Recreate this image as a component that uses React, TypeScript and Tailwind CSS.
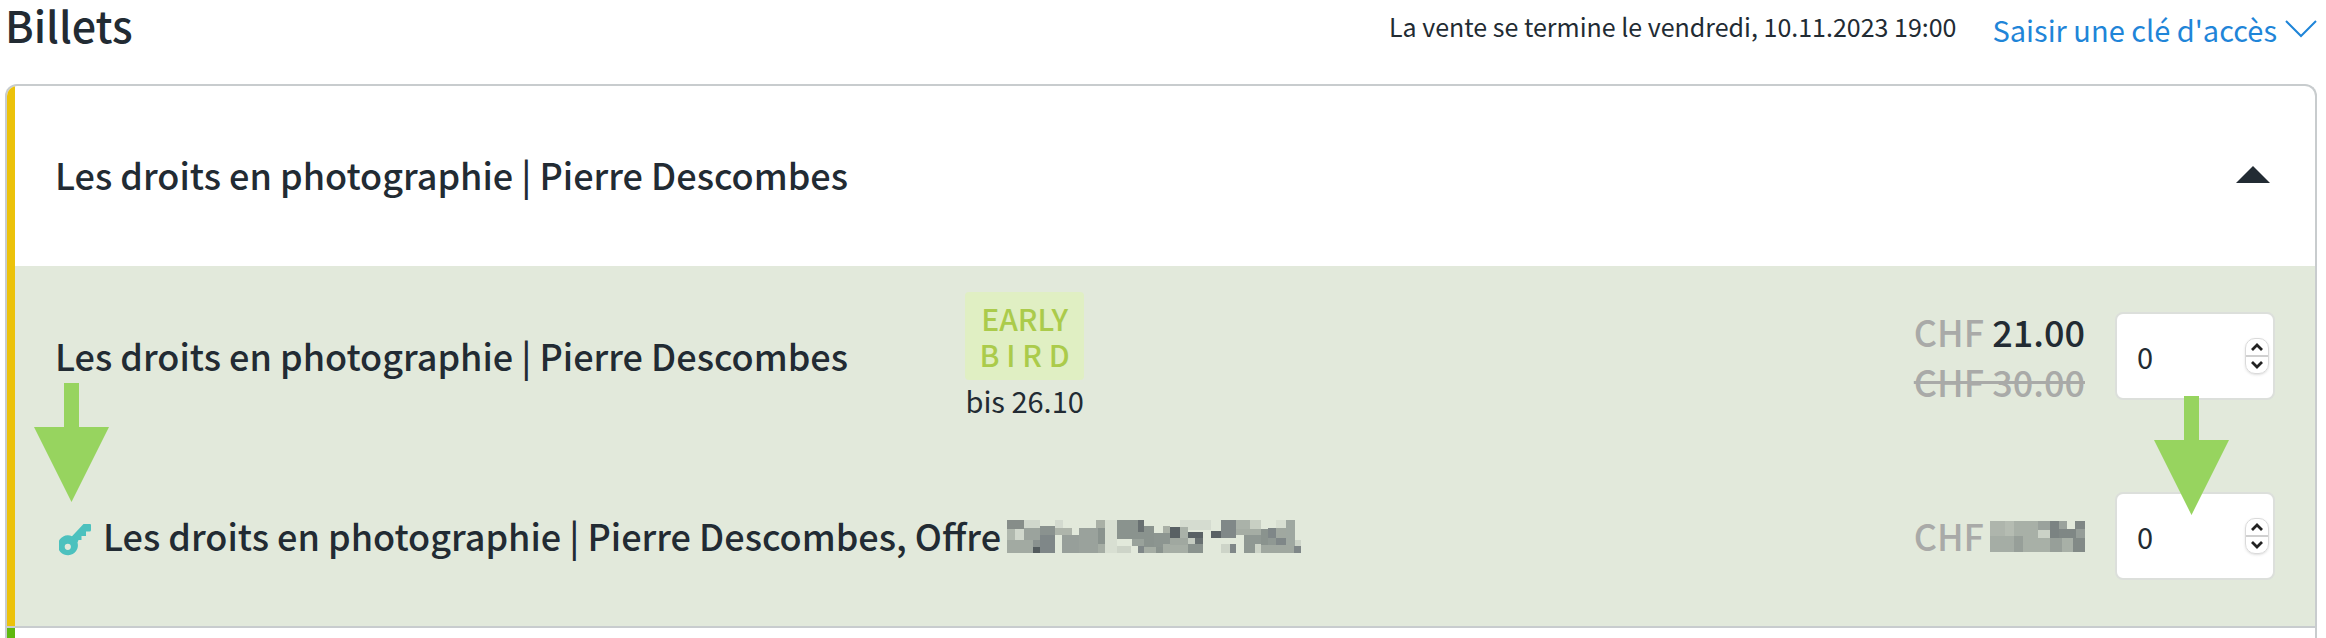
import { useState } from "react";

type Block = [number, number, number, number, string];

const NAME_BLOCKS: Block[] = [
  [81, 63, 51, 27, "#868d89"],
  [132, 63, 48, 24, "#d0d7cc"],
  [225, 63, 24, 24, "#d3dacf"],
  [81, 90, 24, 33, "#b0b8ae"],
  [105, 90, 27, 33, "#d0d7cc"],
  [132, 87, 48, 36, "#9ba39d"],
  [180, 81, 45, 42, "#8a928f"],
  [81, 123, 78, 39, "#a2aaa2"],
  [159, 123, 21, 21, "#8a928f"],
  [159, 144, 21, 18, "#535b5d"],
  [180, 108, 45, 54, "#7f8788"],
  [225, 87, 51, 21, "#aeb5ab"],
  [246, 108, 51, 54, "#979f9a"],
  [297, 87, 57, 75, "#9aa29c"],
  [348, 63, 27, 24, "#a9b0a6"],
  [354, 87, 21, 48, "#8a938e"],
  [354, 135, 21, 27, "#a5ada4"],
  [375, 63, 36, 99, "#d8dfd2"],
  [411, 63, 63, 57, "#8a938e"],
  [474, 63, 18, 36, "#687071"],
  [474, 99, 18, 21, "#8a938e"],
  [411, 141, 42, 21, "#cdd4c8"],
  [456, 120, 36, 21, "#99a29b"],
  [474, 141, 18, 21, "#7f8788"],
  [492, 81, 30, 63, "#8a938e"],
  [492, 144, 36, 18, "#a5ada4"],
  [522, 102, 48, 42, "#8c9590"],
  [549, 81, 21, 21, "#a9b0a6"],
  [528, 144, 21, 18, "#8a938e"],
  [549, 135, 21, 27, "#a5ada4"],
  [570, 84, 30, 33, "#596164"],
  [600, 63, 93, 30, "#d5dcd0"],
  [600, 84, 24, 33, "#aab2a9"],
  [570, 117, 54, 21, "#a0a8a0"],
  [570, 138, 54, 24, "#a6aea5"],
  [624, 99, 45, 18, "#596164"],
  [624, 117, 21, 18, "#c5ccc1"],
  [645, 117, 24, 18, "#687071"],
  [624, 135, 45, 27, "#8a938e"],
  [693, 96, 30, 21, "#596164"],
  [723, 63, 45, 54, "#808888"],
  [768, 63, 42, 27, "#aab2a9"],
  [810, 63, 33, 27, "#c8cfc3"],
  [768, 90, 75, 18, "#a5ada4"],
  [723, 135, 27, 27, "#cdd4c8"],
  [750, 135, 18, 27, "#7f8788"],
  [792, 108, 51, 54, "#8f9893"],
  [825, 135, 18, 27, "#cdd4c8"],
  [843, 90, 21, 48, "#8a938e"],
  [864, 87, 24, 30, "#7f8788"],
  [864, 117, 24, 24, "#8f9893"],
  [888, 63, 30, 24, "#d8dfd2"],
  [888, 87, 30, 30, "#a0a8a0"],
  [888, 117, 30, 24, "#7f8788"],
  [918, 63, 27, 78, "#9fa8a1"],
  [843, 138, 99, 24, "#a0a8a0"],
  [945, 123, 18, 18, "#cdd4c8"],
  [942, 141, 21, 21, "#7f8788"],
];

const PRICE_BLOCKS: Block[] = [
  [330, 729, 45, 45, "#aeb5ac"],
  [375, 729, 27, 45, "#b5bcb2"],
  [402, 729, 72, 45, "#a8b0a7"],
  [474, 729, 36, 27, "#9aa29c"],
  [474, 756, 36, 24, "#cbd2c7"],
  [510, 729, 27, 51, "#7b8382"],
  [537, 729, 24, 24, "#9aa29c"],
  [537, 753, 51, 27, "#7f8785"],
  [561, 729, 24, 24, "#e2e9db"],
  [585, 729, 30, 24, "#7f8785"],
  [588, 753, 27, 27, "#959d98"],
  [330, 774, 72, 48, "#a5ada5"],
  [402, 774, 27, 48, "#979f99"],
  [429, 780, 81, 42, "#a8b0a7"],
  [429, 774, 45, 6, "#a8b0a7"],
  [510, 780, 36, 42, "#979f99"],
  [546, 780, 33, 42, "#a8b0a7"],
  [579, 780, 36, 42, "#828a87"],
];

function Blocks({ blocks, viewBox, className }: { blocks: Block[]; viewBox: string; className: string }) {
  return (
    <svg viewBox={viewBox} className={className} shapeRendering="crispEdges" aria-hidden="true">
      {blocks.map(([x, y, w, h, fill], index) => (
        <rect key={index} x={x} y={y} width={w} height={h} fill={fill} />
      ))}
    </svg>
  );
}

function KeyIcon() {
  return (
    <svg viewBox="0 0 32 32" className="mt-2 size-8 shrink-0" aria-hidden="true">
      <path
        fill="#4cc1be"
        fillRule="evenodd"
        d="M24.500 0H31q1 0 1 1v5q0 1.500-1.500 1.500H27V12h-4.500v4h-3l-1 2.500A10 10 0 1 1 13 12.200zM8.800 19.700a3.100 3.100 0 1 0 0 6.200a3.100 3.100 0 1 0 0-6.200z"
      />
    </svg>
  );
}

function Arrow({ className }: { className: string }) {
  return (
    <svg viewBox="0 0 75 119" className={`absolute h-[119px] w-[75px] pointer-events-none ${className}`} aria-hidden="true">
      <path fill="#97d45f" d="M30 0h15v44h30L37.500 119 0 44h30z" />
    </svg>
  );
}

function Quantity({ label }: { label: string }) {
  const [value, setValue] = useState<number>(0);

  return (
    <div className="flex h-[88px] w-40 shrink-0 items-center rounded-lg border-2 border-[#dcdfdb] bg-white pr-1">
      <input
        type="text"
        inputMode="numeric"
        aria-label={label}
        value={value}
        onChange={(e) => setValue(Number(e.target.value) || 0)}
        className="min-w-0 flex-1 bg-transparent pl-5 text-[29px] leading-10 outline-none"
      />
      <div className="flex h-9 w-6 flex-col divide-y-2 divide-[#d0d0d0] rounded-[10px] border border-[#dadada] shadow-sm">
        <button
          type="button"
          aria-label="Plus"
          onClick={() => setValue(value + 1)}
          className="flex flex-1 items-center justify-center"
        >
          <svg viewBox="0 0 12 8" className="h-2 w-3" fill="none" stroke="#222" strokeWidth="2.800">
            <path d="M1 7 6 2l5 5" />
          </svg>
        </button>
        <button
          type="button"
          aria-label="Moins"
          onClick={() => setValue(Math.max(0, value - 1))}
          className="flex flex-1 items-center justify-center"
        >
          <svg viewBox="0 0 12 8" className="h-2 w-3" fill="none" stroke="#222" strokeWidth="2.800">
            <path d="M1 1 6 6l5-5" />
          </svg>
        </button>
      </div>
    </div>
  );
}

export default function App() {
  const [open, setOpen] = useState<boolean>(true);

  return (
    <div className="flex min-h-screen flex-col bg-white pl-[5px] pr-[9px] font-['Noto_Sans_CJK_SC',sans-serif] text-[#222b33]">
      <header className="flex items-start pb-[26px]">
        <h1 className="flex-1 text-[43px] font-medium leading-[48px]">Billets</h1>
        <p className="text-[25px] leading-[52px]">La vente se termine le vendredi, 10.11.2023 19:00</p>
        <button type="button" className="ml-9 flex items-center gap-2 text-[29px] leading-[58px] text-[#1f85d8]">
          Saisir une clé d'accès
          <svg viewBox="0 0 32 18" className="h-[18px] w-8" fill="none" stroke="currentColor" strokeWidth="2">
            <path d="M1 1l15 15L31 1" />
          </svg>
        </button>
      </header>

      <main className="flex flex-1 flex-col overflow-hidden rounded-t-xl border-2 border-b-0 border-[#c8ccce]">
        <section className="border-b-2 border-[#c8ccce]">
          <div className="border-l-8 border-[#ecc20a]">
            <div className="flex h-[180px] items-center pb-1 pl-10 pr-[45px]">
              <h2 className="flex-1 text-4xl font-medium">Les droits en photographie | Pierre Descombes</h2>
              <button type="button" aria-label="Afficher les billets" aria-expanded={open} onClick={() => setOpen(!open)}>
                <svg viewBox="0 0 34 17" className={open ? "h-[17px] w-[34px]" : "h-[17px] w-[34px] rotate-180"}>
                  <path fill="#222b33" d="M17 0l17 17H0z" />
                </svg>
              </button>
            </div>

            {open && (
              <div className="bg-[#e2e9db]">
                <div className="relative flex h-[180px] items-center pl-10 pr-10">
                  <h3 className="w-[41%] pb-0.5 text-4xl font-medium">Les droits en photographie | Pierre Descombes</h3>
                  <div className="flex flex-col items-center">
                    <p className="h-[88px] w-[119px] rounded bg-[#e0efc3] py-2 text-center text-[30px] font-medium leading-9 text-[#abcb4b]">
                      EARLY
                      <br />B I R D
                    </p>
                    <span className="text-[29px] leading-10">bis 26.10</span>
                  </div>
                  <div className="ml-auto mr-[30px] text-right text-4xl font-medium leading-[50px]">
                    <p>
                      <span className="text-[#a9aaa8]">CHF</span> 21.00
                    </p>
                    <p>
                      <s className="text-[#a9aaa8]">CHF 30.00</s>
                    </p>
                  </div>
                  <Quantity label="Nombre de billets" />
                  <Arrow className="left-[19px] top-[117px] z-10" />
                  <Arrow className="right-[86px] top-[130px] z-10" />
                </div>

                <div className="flex h-[180px] items-center pl-[44px] pr-10">
                  <KeyIcon />
                  <h3 className="ml-3 pb-0.5 text-4xl font-medium">Les droits en photographie | Pierre Descombes, Offre</h3>
                  <Blocks blocks={NAME_BLOCKS} viewBox="81 63 882 99" className="ml-1.5 h-[33px] w-[294px]" />
                  <p className="ml-auto pb-0.5 text-4xl font-medium text-[#a9aaa8]">CHF</p>
                  <Blocks blocks={PRICE_BLOCKS} viewBox="330 729 285 93" className="ml-1.5 mr-[30px] h-[31px] w-[95px]" />
                  <Quantity label="Nombre de billets, Offre" />
                </div>
              </div>
            )}
          </div>
        </section>
        <section className="min-h-2 flex-1 border-l-8 border-[#5fb80f]" />
      </main>
    </div>
  );
}
